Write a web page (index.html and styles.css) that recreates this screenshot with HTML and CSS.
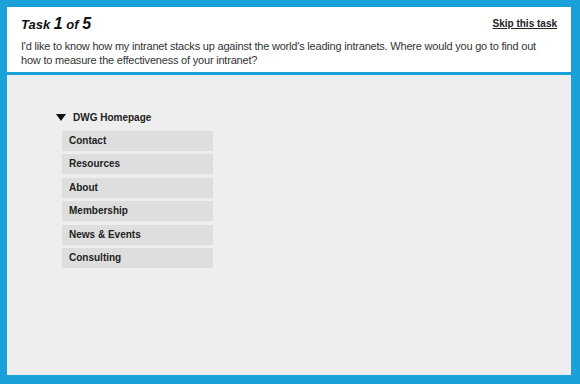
FILE: index.html
```html
<!DOCTYPE html>
<html lang="en">
  <head>
    <meta charset="UTF-8" />
    <title>Task 1 of 5</title>
    <link rel="stylesheet" href="styles.css">
  </head>
  <body>
    <div class="frame">
      <header class="task-header">
        <div class="task-top">
          <h1 class="task-title">Task <span class="num">1</span> of <span class="num">5</span></h1>
          <a href="#" class="skip-link">Skip this task</a>
        </div>
        <p class="task-text">I'd like to know how my intranet stacks up against the world's leading intranets. Where would you go to find out how to measure the effectiveness of your intranet?</p>
      </header>

      <div class="tree-area">
        <div class="tree">
          <div class="tree-root">
            <span class="arrow"></span>
            <span>DWG Homepage</span>
          </div>
          <ul class="tree-items">
            <li>Contact</li>
            <li>Resources</li>
            <li>About</li>
            <li>Membership</li>
            <li>News &amp; Events</li>
            <li>Consulting</li>
          </ul>
        </div>
      </div>
    </div>
  </body>
</html>
```

FILE: styles.css
```css
body {
  margin: 0;
  background-color: #1ba1da;
  font-family: "Liberation Sans", Arial, sans-serif;
}

.frame {
  margin: 7px 9px 9px 7px;
  width: 564px;
  height: 368px;
  display: flex;
  flex-direction: column;
  background: #eeeeee;
}

.task-header {
  background: #fff;
  height: 68px;
  box-sizing: border-box;
  padding: 7px 14px 0 14px;
  border-bottom: 3px solid #1ba1da;
  flex: none;
}

.task-top {
  display: flex;
  justify-content: space-between;
  align-items: flex-start;
}

.task-title {
  margin: 0;
  font-size: 13px;
  font-weight: bold;
  font-style: italic;
  line-height: 20px;
  color: #111;
}

.task-title .num {
  font-size: 16px;
}

.skip-link {
  margin-top: 4px;
  font-size: 10px;
  font-weight: bold;
  color: #222;
  text-decoration: underline;
}

.task-text {
  margin: 4px 0 0 0;
  font-size: 11px;
  letter-spacing: -0.2px;
  line-height: 14px;
  color: #333;
}

.tree-area {
  flex: 1;
  padding: 34px 0 0 49px;
}

.tree-root {
  display: flex;
  align-items: center;
  gap: 7px;
  font-size: 10px;
  font-weight: bold;
  color: #222;
  height: 16px;
}

.arrow {
  width: 0;
  height: 0;
  border-left: 5px solid transparent;
  border-right: 5px solid transparent;
  border-top: 7px solid #111;
}

.tree-items {
  list-style: none;
  margin: 6px 0 0 6px;
  padding: 0;
  display: flex;
  flex-direction: column;
  gap: 3.4px;
}

.tree-items li {
  width: 151px;
  height: 20px;
  line-height: 20px;
  box-sizing: border-box;
  padding-left: 7px;
  background: #dedede;
  font-size: 10px;
  font-weight: bold;
  color: #222;
}
```
